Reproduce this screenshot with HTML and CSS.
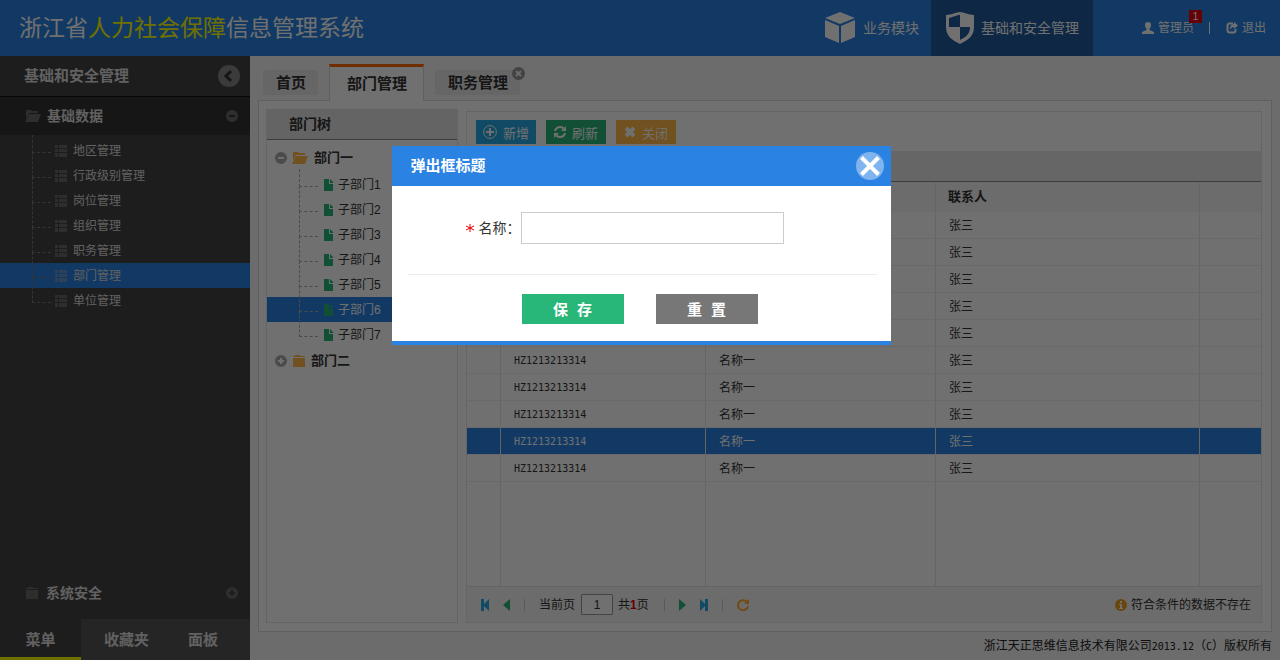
FILE: index.html
```html
<!DOCTYPE html>
<html lang="zh-CN">
<head>
<meta charset="utf-8">
<meta name="viewport" content="width=device-width, initial-scale=1">
<title>浙江省人力社会保障信息管理系统</title>
<link rel="stylesheet" href="styles.css">
</head>
<body>
<svg class="sprite" aria-hidden="true">
  <symbol id="i-list" viewBox="0 0 12 12"><path d="M0 0h3v3H0zM4 0h8v3H4zM0 4h3v3H0zM4 4h8v3H4zM0 8h3v4H0zM4 8h8v4H4z"/></symbol>
  <symbol id="i-open" viewBox="0 0 16 12"><path d="M1 0h5l1 1h6v2H4L1 9z"/><path d="M4 4h12l-3 8H0z"/></symbol>
  <symbol id="i-folder" viewBox="0 0 12 12"><path d="M2 0h5v1h5v1H0V1h2zM0 3h12v9H0z"/></symbol>
  <symbol id="i-minus" viewBox="0 0 12 12"><path fill-rule="evenodd" d="M6 0a6 6 0 1 1 0 12A6 6 0 0 1 6 0zM3 5v2h6V5z"/></symbol>
  <symbol id="i-plus" viewBox="0 0 12 12"><path fill-rule="evenodd" d="M6 0a6 6 0 1 1 0 12A6 6 0 0 1 6 0zM5 3v2H3v2h2v2h2V7h2V5H7V3z"/></symbol>
  <symbol id="i-file" viewBox="0 0 9 12"><path d="M0 0h5v5h4v7H0z"/><path d="M6 0l3 3v1H6z"/></symbol>
</svg>

<header class="topbar">
  <h1 class="brand">浙江省<em>人力社会保障</em>信息管理系统</h1>
  <nav class="modules">
    <a class="module" href="#">
      <svg width="32" height="32" viewBox="0 0 32 32" fill="currentColor"><path d="M16 0l15 6-15 6L1 6zM1 8l14 6v17L1 25zM31 8l-14 6v17l14-6z"/></svg>
      业务模块
    </a>
    <a class="module is-active" href="#">
      <svg width="28" height="32" viewBox="0 0 28 32" fill="currentColor"><path fill-rule="evenodd" d="M0 3C6 3 10 0 14 0s8 3 14 3v12c0 9-6 13-14 17C6 28 0 24 0 15zM3 6v9h11V3C10 3 8 5 3 6zM14 15v13c6-3 10-6 10-13z"/></svg>
      基础和安全管理
    </a>
  </nav>
  <div class="account">
    <a class="account-link" href="#">
      <svg width="12" height="12" viewBox="0 0 12 12" fill="currentColor"><path d="M6 0c2 0 3 1 3 3S8 6 7.500 7v1L12 10v2H0v-2l4.500-2V7C4 6 3 5 3 3s1-3 3-3z"/></svg>
      管理员<span class="badge">1</span>
    </a>
    <span class="account-sep"></span>
    <a class="account-link" href="#">
      <svg width="12" height="12" viewBox="0 0 12 12"><path d="M7 1.500H3.500a2 2 0 0 0-2 2v5a2 2 0 0 0 2 2h4a2 2 0 0 0 2-2V7" fill="none" stroke="currentColor" stroke-width="2"/><path d="M8 0l4 3.500L8 7V5C6 5 5 6 4.500 8 3.500 5 5 2 8 2z" fill="currentColor"/></svg>
      退出
    </a>
  </div>
</header>

<div class="layout">
  <aside class="sidebar">
    <div class="side-head">
      <h2>基础和安全管理</h2>
      <button class="collapse" type="button" aria-label="collapse"><svg width="22" height="22" viewBox="0 0 22 22"><circle cx="11" cy="11" r="11" fill="#868686"/><path d="M13 6l-5 5 5 5" fill="none" stroke="#333" stroke-width="3"/></svg></button>
    </div>
    <div class="side-section is-open">
      <svg class="ico-open"><use href="#i-open"/></svg><span>基础数据</span><svg class="ico-toggle"><use href="#i-minus"/></svg>
    </div>
    <ul class="side-menu">
      <li><a href="#"><svg><use href="#i-list"/></svg>地区管理</a></li>
      <li><a href="#"><svg><use href="#i-list"/></svg>行政级别管理</a></li>
      <li><a href="#"><svg><use href="#i-list"/></svg>岗位管理</a></li>
      <li><a href="#"><svg><use href="#i-list"/></svg>组织管理</a></li>
      <li><a href="#"><svg><use href="#i-list"/></svg>职务管理</a></li>
      <li class="is-selected"><a href="#"><svg><use href="#i-list"/></svg>部门管理</a></li>
      <li><a href="#"><svg><use href="#i-list"/></svg>单位管理</a></li>
    </ul>
    <div class="side-section is-last">
      <svg class="ico-folder"><use href="#i-folder"/></svg><span>系统安全</span><svg class="ico-toggle"><use href="#i-plus"/></svg>
    </div>
    <div class="side-tabs">
      <button type="button" class="is-active">菜单</button>
      <button type="button">收藏夹</button>
      <button type="button">面板</button>
    </div>
  </aside>

  <main class="main">
    <nav class="tabs">
      <a class="tab" href="#">首页</a>
      <a class="tab is-active" href="#">部门管理</a>
      <a class="tab" href="#">职务管理<svg class="tab-close" viewBox="0 0 13 13"><circle cx="6.500" cy="6.500" r="6.500" fill="#999"/><path d="M4 4l5 5M9 4l-5 5" stroke="#f5f5f5" stroke-width="2"/></svg></a>
    </nav>
    <div class="panel">
      <section class="tree">
        <h3>部门树</h3>
        <div class="tree-root">
          <svg class="ico-toggle"><use href="#i-minus"/></svg><svg class="ico-open"><use href="#i-open"/></svg>部门一
        </div>
        <ul class="tree-list">
          <li><svg><use href="#i-file"/></svg>子部门1</li>
          <li><svg><use href="#i-file"/></svg>子部门2</li>
          <li><svg><use href="#i-file"/></svg>子部门3</li>
          <li><svg><use href="#i-file"/></svg>子部门4</li>
          <li><svg><use href="#i-file"/></svg>子部门5</li>
          <li class="is-selected"><svg><use href="#i-file"/></svg>子部门6</li>
          <li><svg><use href="#i-file"/></svg>子部门7</li>
        </ul>
        <div class="tree-root">
          <svg class="ico-toggle"><use href="#i-plus"/></svg><svg class="ico-folder"><use href="#i-folder"/></svg>部门二
        </div>
      </section>

      <section class="grid">
        <div class="toolbar">
          <button class="btn btn-blue" type="button"><svg width="14" height="14" viewBox="0 0 14 14" fill="none" stroke="currentColor"><circle cx="7" cy="7" r="6.400"/><path d="M7 3v8M3 7h8" stroke-width="2"/></svg>新增</button>
          <button class="btn btn-green" type="button"><svg width="12" height="12" viewBox="0 0 12 12"><path d="M1 5a5 5 0 0 1 8.500-2.500M11 7a5 5 0 0 1-8.500 2.500" fill="none" stroke="currentColor" stroke-width="2"/><path d="M12 0v5H7zM0 12V7h5z" fill="currentColor"/></svg>刷新</button>
          <button class="btn btn-orange" type="button"><svg width="12" height="12" viewBox="0 0 12 12"><path d="M2 2l8 8M10 2l-8 8" stroke="currentColor" stroke-width="4"/></svg>关闭</button>
        </div>
        <div class="grid-band"></div>
        <div class="grid-body">
          <table>
            <colgroup><col class="c-check"><col class="c-code"><col class="c-name"><col class="c-contact"><col class="c-rest"></colgroup>
            <thead><tr><th></th><th></th><th></th><th>联系人</th><th></th></tr></thead>
            <tbody>
              <tr><td></td><td></td><td></td><td>张三</td><td></td></tr>
              <tr><td></td><td></td><td></td><td>张三</td><td></td></tr>
              <tr><td></td><td></td><td></td><td>张三</td><td></td></tr>
              <tr><td></td><td></td><td></td><td>张三</td><td></td></tr>
              <tr><td></td><td></td><td></td><td>张三</td><td></td></tr>
              <tr><td></td><td class="code">HZ1213213314</td><td>名称一</td><td>张三</td><td></td></tr>
              <tr><td></td><td class="code">HZ1213213314</td><td>名称一</td><td>张三</td><td></td></tr>
              <tr><td></td><td class="code">HZ1213213314</td><td>名称一</td><td>张三</td><td></td></tr>
              <tr class="is-selected"><td></td><td class="code">HZ1213213314</td><td>名称一</td><td>张三</td><td></td></tr>
              <tr><td></td><td class="code">HZ1213213314</td><td>名称一</td><td>张三</td><td></td></tr>
              <tr class="filler"><td></td><td></td><td></td><td></td><td></td></tr>
            </tbody>
          </table>
        </div>
        <div class="pager">
          <button class="pg blue" type="button" aria-label="first"><svg width="8" height="12" viewBox="0 0 8 12"><path d="M0 0h3v5l5-5v12L3 7v5H0z"/></svg></button>
          <button class="pg green" type="button" aria-label="previous"><svg width="7" height="12" viewBox="0 0 7 12"><path d="M7 0v12L0 6z"/></svg></button>
          <span class="pg-sep"></span>
          <label class="pg-label" for="page">当前页</label>
          <input id="page" class="pg-input" type="text" value="1">
          <span class="pg-total">共<b>1</b>页</span>
          <span class="pg-sep"></span>
          <button class="pg green" type="button" aria-label="next"><svg width="7" height="12" viewBox="0 0 7 12"><path d="M0 0v12l7-6z"/></svg></button>
          <button class="pg blue" type="button" aria-label="last"><svg width="8" height="12" viewBox="0 0 8 12"><path d="M8 0H5v5L0 0v12l5-5v5h3z"/></svg></button>
          <span class="pg-sep"></span>
          <button class="pg orange" type="button" aria-label="reload"><svg width="12" height="12" viewBox="0 0 12 12"><path d="M9.500 2.500A5 5 0 1 0 11 7" fill="none" stroke="currentColor" stroke-width="2"/><path d="M12 0v5H7z"/></svg></button>
          <span class="pg-note"><svg width="12" height="12" viewBox="0 0 12 12"><circle cx="6" cy="6" r="6" fill="#f0a020"/><path d="M5 2h2v2H5zM4 5h3v4h1v1H4V9h1V6H4z" fill="#fff"/></svg>符合条件的数据不存在</span>
        </div>
      </section>
    </div>
    <footer class="footer">浙江天正思维信息技术有限公司<span class="num">2013.12</span>（<span class="num">C</span>）版权所有</footer>
  </main>
</div>

<div class="overlay">
  <form class="dialog" role="dialog" aria-labelledby="dlg-title">
    <div class="dialog-head">
      <h2 id="dlg-title">弹出框标题</h2>
      <button class="dialog-close" type="button" aria-label="close"><svg width="28" height="28" viewBox="0 0 28 28"><circle cx="14" cy="14" r="14" fill="#7fb4ee"/><path d="M5.500 5.500l17 17M22.500 5.500l-17 17" stroke="#fff" stroke-width="4"/></svg></button>
    </div>
    <div class="dialog-body">
      <div class="field">
        <span class="required"><svg width="8" height="8" viewBox="0 0 8 8"><path d="M4 0v8M0 2l8 4M8 2L0 6" stroke="#e60000"/></svg></span>
        <label for="name">名称：</label>
        <input id="name" type="text">
      </div>
      <div class="actions">
        <button class="save" type="submit">保 存</button>
        <button class="reset" type="reset">重 置</button>
      </div>
    </div>
  </form>
</div>
</body>
</html>
```
FILE: styles.css
```css
* { box-sizing: border-box; }
body {
  margin: 0;
  min-height: 100vh;
  display: flex;
  flex-direction: column;
  font: 12px/16px "Liberation Sans", "Noto Sans CJK SC", sans-serif;
  color: #333;
  background: #f5f5f5;
}
h1, h2, h3, ul { margin: 0; padding: 0; font-weight: normal; }
ul { list-style: none; }
a { color: inherit; text-decoration: none; }
button, input { font-family: inherit; border: 0; padding: 0; margin: 0; border-radius: 0; }
button { background: none; color: inherit; cursor: pointer; }
svg { display: block; flex: none; }
.sprite { position: absolute; width: 0; height: 0; }
.num { font-family: "DejaVu Sans Mono", monospace; font-size: 10px; }

.ico-open { width: 16px; height: 12px; }
.ico-folder { width: 12px; height: 12px; }
.ico-toggle { width: 12px; height: 12px; }

/* Top bar */
.topbar {
  height: 56px;
  display: flex;
  align-items: center;
  padding-left: 19px;
  background: #2a82e2;
  color: #fff;
}
.brand { flex: 1; font-size: 23px; line-height: 32px; }
.brand em { font-style: normal; color: #ff0; }
.modules { display: flex; height: 100%; }
.module { display: flex; align-items: center; gap: 7px; padding: 0 12px 0 15px; font-size: 14px; }
.module.is-active { background: #1e5a9b; padding-right: 14px; }
.account { display: flex; align-items: center; padding: 0 14px 0 49px; }
.account-link { display: flex; align-items: center; gap: 4px; position: relative; }
.account-sep { width: 1px; height: 12px; margin: 0 16px 0 11px; background: #fff; }
.badge {
  position: absolute;
  top: -10px;
  right: -4px;
  width: 13px;
  height: 13px;
  background: #e60012;
  font-size: 11px;
  line-height: 13px;
  text-align: center;
}

.layout { flex: 1; display: flex; }

/* Sidebar */
.sidebar { width: 250px; flex: none; display: flex; flex-direction: column; background: #434343; color: #ddd; }
.side-head {
  height: 41px;
  display: flex;
  align-items: center;
  justify-content: space-between;
  padding: 0 10px 1px 24px;
  border-bottom: 1px solid #111;
}
.side-head h2 { font-size: 15px; font-weight: bold; }
.side-section { height: 38px; display: flex; align-items: center; padding: 0 12px 0 25px; font-size: 14px; font-weight: bold; }
.side-section.is-open { background: #323232; }
.side-section span { flex: 1; margin-left: 6px; }
.side-section svg { fill: #696969; }
.side-section.is-last { margin-top: auto; height: 52px; padding-left: 26px; }
.side-section.is-last span { margin-left: 8px; }
.side-menu { padding-top: 3px; }
.side-menu li { position: relative; }
.side-menu a { display: flex; align-items: center; gap: 6px; height: 25px; padding-left: 55px; }
.side-menu svg { width: 12px; height: 12px; fill: #696969; }
.side-menu li::before,
.tree-list li::before {
  content: "";
  position: absolute;
  left: 32px;
  top: -11px;
  width: 18px;
  height: 25px;
  border: dashed #777;
  border-width: 0 0 1px 1px;
}
.side-menu li:first-child::before,
.tree-list li:first-child::before { top: -3px; height: 17px; }
.side-menu .is-selected { background: #2a82e2; }
.side-menu .is-selected svg { fill: #6a94c4; }
.side-tabs { display: flex; background: #555; }
.side-tabs button { height: 41px; padding: 0 16px 0 23px; font-size: 15px; font-weight: bold; border-bottom: 3px solid transparent; }
.side-tabs .is-active { width: 81px; padding: 0; background: #434343; border-color: #ff0; }

/* Workspace */
.main { flex: 1; min-width: 0; display: flex; flex-direction: column; padding: 8px 8px 0; }
.tabs { display: flex; align-items: flex-end; gap: 11px; padding-left: 5px; }
.tab {
  position: relative;
  height: 25px;
  margin-bottom: 5px;
  padding: 0 12px 0 13px;
  font-size: 15px;
  line-height: 25px;
  font-weight: bold;
  background: #e8e8e8;
  border-radius: 3px;
}
.tab.is-active {
  height: 37px;
  margin-bottom: -1px;
  padding: 3px 16px 0 17px;
  line-height: 27px;
  background: #fff;
  border: 1px solid #d9d9d9;
  border-width: 3px 1px 0;
  border-top-color: #f60;
  border-radius: 0;
  z-index: 1;
}
.tab-close { position: absolute; top: -3px; right: -5px; width: 13px; height: 13px; }
.panel { flex: 1; display: flex; gap: 8px; padding: 8px 9px 8px 7px; background: #fff; border: 1px solid #d9d9d9; }
.footer { height: 28px; line-height: 28px; text-align: right; color: #222; }

/* Department tree */
.tree { width: 192px; flex: none; border: 1px solid #e3e3e3; }
.tree h3 { height: 30px; margin-bottom: 4px; padding-left: 22px; font-size: 14px; line-height: 29px; font-weight: bold; background: #e3e3e3; border-bottom: 1px solid #888; }
.tree-root { height: 28px; display: flex; align-items: center; gap: 6px; padding-left: 8px; font-size: 13px; font-weight: bold; }
.tree-root .ico-toggle { fill: #aaa; }
.tree-root .ico-open { fill: #ffb848; margin-left: -1px; }
.tree-root .ico-folder { fill: #ffb848; }
.tree-list li { position: relative; height: 25px; display: flex; align-items: center; gap: 5px; padding-left: 57px; }
.tree-list svg { width: 9px; height: 12px; fill: #29b779; }
.tree-list li::before { border-color: #aaa; }
.tree-list .is-selected { background: #2a82e2; color: #fff; }

/* Data grid */
.grid { flex: 1; min-width: 0; display: flex; flex-direction: column; margin-top: 2px; border: 1px solid #e6e6e6; }
.toolbar { display: flex; gap: 10px; padding: 8px 9px 7px; }
.btn { width: 60px; height: 24px; display: flex; align-items: center; justify-content: center; gap: 6px; font-size: 13px; color: #fff; }
.btn-blue { background: #27a9e3; }
.btn-green { background: #29b779; }
.btn-orange { background: #ffb848; }
.grid-band { height: 31px; background: #e8e8e8; border-bottom: 1px solid #888; }
.grid-body { flex: 1; display: flex; }
table { flex: 1; width: 100%; table-layout: fixed; border-collapse: separate; border-spacing: 0; }
.c-check { width: 34px; }
.c-code { width: 205px; }
.c-name { width: 230px; }
.c-contact { width: 264px; }
th, td { height: 27px; padding: 2px 0 0 13px; text-align: left; border-right: 1px solid #e6e6e6; border-bottom: 1px solid #f0f0f0; }
th { height: 30px; font-size: 13px; background: #f5f5f5; border-bottom: 0; padding: 0 0 0 12px; }
th:last-child, td:last-child { border-right: 0; }
.code { font-family: "DejaVu Sans Mono", monospace; font-size: 10px; }
.is-selected td { background: #2a82e2; color: #fff; }
.filler td { height: auto; border-bottom: 0; }
.filler { height: 100%; }

.pager { height: 36px; display: flex; align-items: center; padding: 0 10px 0 14px; background: #f5f5f5; border-top: 1px solid #e3e3e3; }
.pg { margin-right: 14px; }
.pg svg { fill: currentColor; }
.blue { color: #27a9e3; }
.green { color: #29b779; }
.orange { color: #ffa928; }
.pg-sep { width: 1px; height: 12px; margin-right: 14px; background: #ccc; }
.pg-input { width: 32px; height: 21px; margin: 0 5px 0 6px; font-size: 12px; text-align: center; color: #333; background: #fff; border: 1px solid #999; border-radius: 1px; }
.pg-total { margin-right: 15px; }
.pg-total b { color: #e60012; }
.pg-note { margin-left: auto; display: flex; align-items: center; gap: 4px; }

/* Modal dialog */
.overlay { position: fixed; inset: 0; z-index: 10; display: flex; justify-content: center; align-items: flex-start; padding: 146px 0 0 2px; background: rgba(0, 0, 0, 0.56); }
.dialog { width: 499px; max-width: 100%; background: #fff; border-bottom: 4px solid #2a82e2; }
.dialog-head { height: 40px; display: flex; align-items: center; justify-content: space-between; padding: 0 7px 0 19px; background: #2a82e2; color: #fff; }
.dialog-head h2 { font-size: 15px; font-weight: bold; }
.dialog-body { padding: 26px 14px 17px 16px; }
.field { display: flex; align-items: center; padding: 0 93px 30px 58px; border-bottom: 1px solid #ebebeb; font-size: 14px; }
.required { margin-right: 5px; }
.field label { width: 42px; white-space: nowrap; }
.field input { flex: 1; min-width: 0; height: 32px; padding: 0 8px; font-size: 14px; border: 1px solid #ccc; }
.actions { display: flex; gap: 32px; padding: 19px 0 0 114px; }
.actions button { width: 102px; height: 30px; color: #fff; font-family: "Liberation Mono", "Noto Sans CJK SC", monospace; font-size: 15px; font-weight: bold; }
.actions .save { background: #29b779; }
.actions .reset { background: #777; }
```
